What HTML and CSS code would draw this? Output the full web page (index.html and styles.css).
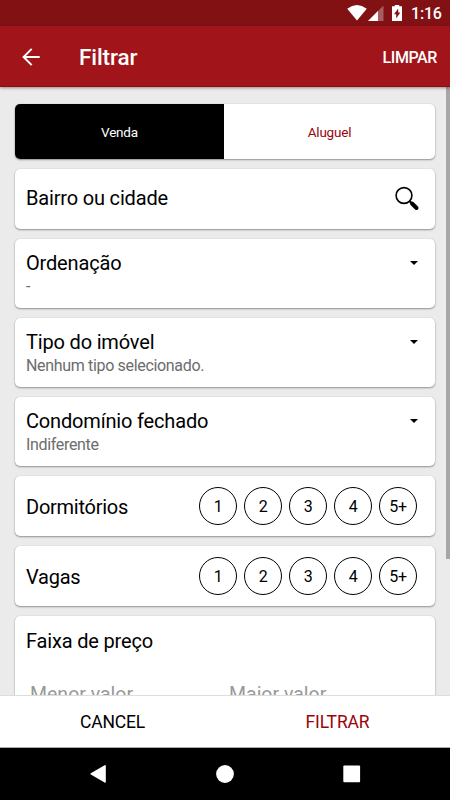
FILE: index.html
```html
<!DOCTYPE html>
<html lang="pt-BR">
<head>
<meta charset="utf-8">
<title>Filtrar</title>
<link rel="stylesheet" href="styles.css">
</head>
<body>
<div class="screen">
  <div class="status">
    <svg class="status-icons" width="61" height="26" viewBox="0 0 61 26">
      <path fill="#fff" d="M.2 8.700Q10 1.500 19.800 8.700L10 20.500Z"/>
      <path fill="#a75d60" d="M36.500 5.500V21H21Z"/>
      <path fill="#fff" d="M31 11V21H21Z"/>
      <path fill="#fff" d="M47.800 5h4.400v1.300H55V21H45V6.300h2.800z"/>
      <path fill="#821114" d="M51.200 8.500 47 14.300h2.200v4.200l4.100-5.900h-2.100z"/>
    </svg>
    <span class="clock">1:16</span>
  </div>
  <header class="appbar">
    <svg class="back" width="20" height="20" viewBox="0 0 20 20" fill="none" stroke="#fff" stroke-width="2"><path d="M18.700 10H2.500M10.700 1.900 2.600 10l8.100 8.100"/></svg>
    <h1>Filtrar</h1>
    <span class="clear">LIMPAR</span>
  </header>
  <main class="content">
    <div class="card tabs"><div class="tab active">Venda</div><div class="tab">Aluguel</div></div>
    <div class="card search"><span class="title">Bairro ou cidade</span>
      <svg width="26" height="26" viewBox="0 0 26 26" fill="none" stroke="#000"><circle cx="10" cy="9.500" r="7.900" stroke-width="1.600"/><path d="m15.700 15.200 2 2" stroke-width="2"/><path d="m18 17.500 4.500 4.500" stroke-width="4" stroke-linecap="round"/></svg>
    </div>
    <div class="card select"><div class="row"><span class="title">Ordenação</span><i class="caret"></i></div><div class="sub">-</div></div>
    <div class="card select"><div class="row"><span class="title">Tipo do imóvel</span><i class="caret"></i></div><div class="sub">Nenhum tipo selecionado.</div></div>
    <div class="card select"><div class="row"><span class="title">Condomínio fechado</span><i class="caret"></i></div><div class="sub">Indiferente</div></div>
    <div class="card count"><span class="title">Dormitórios</span><div class="options"><b>1</b><b>2</b><b>3</b><b>4</b><b>5+</b></div></div>
    <div class="card count"><span class="title">Vagas</span><div class="options"><b>1</b><b>2</b><b>3</b><b>4</b><b>5+</b></div></div>
    <div class="card price"><span class="title">Faixa de preço</span><div class="fields"><span>Menor valor</span><span>Maior valor</span></div></div>
    <div class="scrollbar"></div>
  </main>
  <footer class="actions"><span>CANCEL</span><span class="primary">FILTRAR</span></footer>
  <nav class="navbar">
    <svg width="18" height="20" viewBox="0 0 18 20"><path fill="#fff" d="M15.600 1.300Q16.800.700 16.800 2v15.800q0 1.300-1.200.600L1.800 10.600q-1-.700 0-1.300z"/></svg>
    <svg width="18" height="18" viewBox="0 0 18 18"><circle cx="9" cy="9" r="8.900" fill="#fff"/></svg>
    <svg width="18" height="18" viewBox="0 0 18 18"><rect x=".3" y=".5" width="16.800" height="16.800" rx="1" fill="#fff"/></svg>
  </nav>
</div>
</body>
</html>
```
FILE: styles.css
```css
* { box-sizing: border-box; }
body { margin: 0; font-family: Roboto, "Liberation Sans", sans-serif; color: #000; }
.screen { width: 450px; height: 800px; display: flex; flex-direction: column; overflow: hidden; background: #ebebeb; }
.status { height: 26px; flex: none; background: #821114; display: flex; align-items: center; justify-content: flex-end; padding-right: 9px; }
.status-icons { margin-right: 3px; }
.clock { color: #fff; font-size: 16px; font-weight: 500; letter-spacing: -.2px; line-height: 26px; width: 30px; padding-top: 2px; white-space: nowrap; }
.appbar { height: 61px; flex: none; background: #a11419; border-bottom: 1px solid #930b0d; color: #fff; display: flex; align-items: center; padding: 1px 13px 0 21px; box-shadow: 0 1px 3px rgba(0,0,0,.4); z-index: 1; }
h1 { margin: 0 0 0 38px; font-size: 22.500px; font-weight: 500; letter-spacing: -.1px; line-height: 30px; }
.clear { margin-left: auto; padding-top: 1px; font-size: 16px; font-weight: 500; letter-spacing: -.4px; }
.content { height: 608px; flex: none; position: relative; overflow: hidden; padding: 16.500px 15px 0; display: flex; flex-direction: column; gap: 10px; }
.card { flex: none; background: #fff; border-radius: 5px; box-shadow: 0 1px 2px rgba(0,0,0,.38), 0 0 1px rgba(0,0,0,.18); padding: 0 11px; }
.title { font-size: 20px; line-height: 24px; letter-spacing: -.17px; }
.tabs { height: 55.500px; padding: 0; display: flex; overflow: hidden; }
.tab { flex: 1; display: flex; align-items: center; justify-content: center; font-size: 13.500px; letter-spacing: -.2px; color: #990509; padding-top: 1px; }
.tab.active { background: #000; color: #fff; flex: none; width: 209px; }
.search { height: 59.500px; display: flex; align-items: center; justify-content: space-between; padding-right: 15px; }
.search .title { padding-bottom: 2px; }
.select { height: 69.200px; padding-top: 12.500px; }
.row { display: flex; align-items: center; justify-content: space-between; padding-right: 6px; }
.caret { border: 4.500px solid transparent; border-top-color: #000; border-bottom: 0; }
.sub { font-size: 16px; line-height: 20px; letter-spacing: -.33px; color: #6c6c6c; margin-top: 2px; }
.count { height: 60px; display: flex; align-items: center; justify-content: space-between; padding-right: 18px; }
.count .title { padding-top: 1px; letter-spacing: -.25px; }
.options { display: flex; gap: 7px; }
.options b { width: 38px; height: 38px; border: 1.200px solid #000; border-radius: 50%; display: flex; align-items: center; justify-content: center; font-size: 16px; font-weight: 400; letter-spacing: -.3px; padding-top: 1px; }
.price { height: 140px; padding-top: 13px; }
.fields { display: grid; grid-template-columns: 199px 1fr; margin-top: 29.500px; padding-left: 4px; font-size: 19.500px; line-height: 24px; color: #999; }
.scrollbar { position: absolute; right: 0; top: 0; width: 4.500px; height: 472px; background: #a6a6a6; }
.actions { height: 53px; flex: none; background: #fff; border-top: 1px solid #ddd; border-bottom: 1px solid #aaa; display: grid; grid-template-columns: 1fr 1fr; align-items: center; text-align: center; font-size: 17.500px; letter-spacing: -.15px; }
.primary { color: #990509; }
.navbar { flex: 1; background: #000; display: flex; align-items: center; justify-content: space-between; padding: 0 89px; }
```
